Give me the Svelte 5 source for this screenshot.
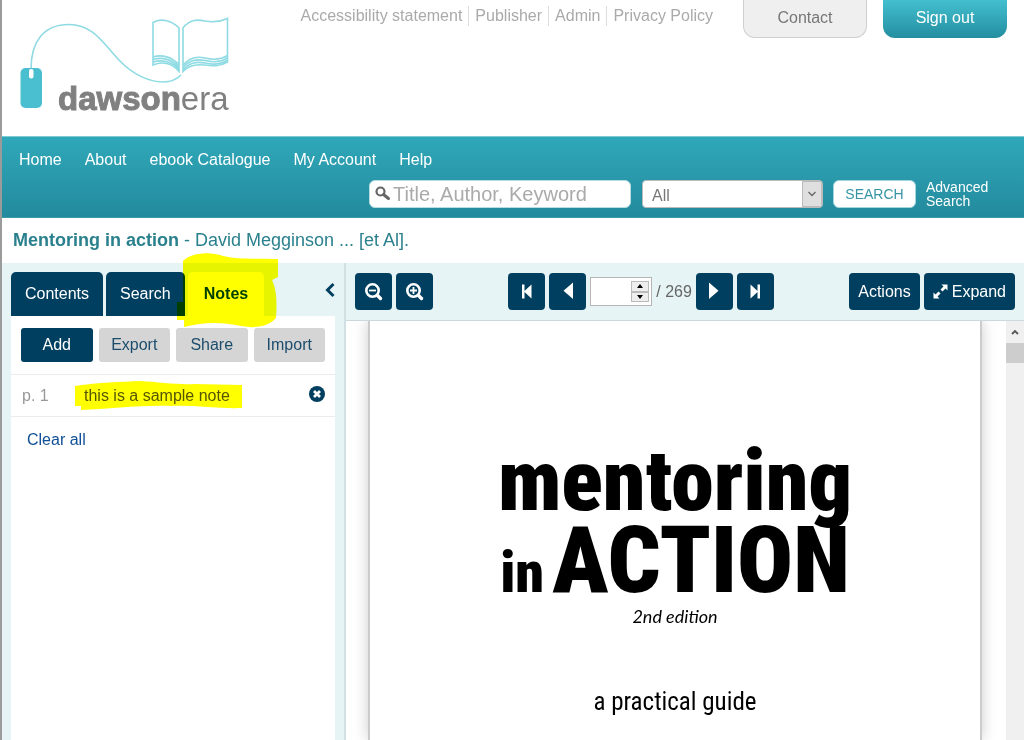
<script lang="ts">
  const links = ['Accessibility statement', 'Publisher', 'Admin', 'Privacy Policy'];
  const menu = ['Home', 'About', 'ebook Catalogue', 'My Account', 'Help'];
  const tabs = ['Contents', 'Search', 'Notes'];
  const noteActions = ['Add', 'Export', 'Share', 'Import'];
  const pageCount = 269;

  let activeTab = $state('Notes');
  let notes = $state([{ page: 1, text: 'this is a sample note' }]);
  let query = $state('');
  let page = $state('');

  function step(by: number) {
    const next = (Number(page) || 0) + by;
    page = String(Math.min(pageCount, Math.max(1, next)));
  }
</script>

<div class="app">
  <header>
    <a class="logo" href="#home" aria-label="dawsonera">
      <svg width="216" height="104" viewBox="16 12 216 104">
        <g fill="none" stroke="#8fdbe3" stroke-width="1.6">
          <path d="M31 69C31 41 44 24.500 69 24.500C93 24.500 103 43 119 60C133 75 150 82 163 82C171 82 177 79 181 75" />
          <path d="M153 22.500C160 18 171 20 179 28V71.500C172 63 162 61 153 65Z" />
          <path d="M183 28C190 19 198 19.500 205 21C213 22.500 221 21.500 227.500 18.500V62C219 67 212 66 204 65C196 64 189 65 183 71.500Z" />
          <path d="M153 57C162 54 172 57 179 65M153 59.500C162 56.500 172 59.500 179 67.500M153 62C162 59 172 62 179 69.500" />
          <path d="M183 65C190 57 197 56 205 58C213 60 221 59.500 227.500 55.500M183 67.500C190 59.500 197 59 205 60.500C213 62.500 221 62 227.500 58M183 70C190 62 197 61.500 205 63C213 65 221 64 227.500 60.500" />
        </g>
        <rect x="20.500" y="68" width="21.500" height="40" rx="5" fill="#4abfcf" />
        <rect x="29" y="69" width="4.500" height="9.500" rx="2" fill="#fff" />
        <text x="58" y="109.500" fill="#808080" font-size="33"><tspan font-weight="bold" stroke="#808080">dawson</tspan><tspan>era</tspan></text>
      </svg>
    </a>
    <nav class="links" aria-label="Site information">
      {#each links as link}
        <a href="#info">{link}</a>
      {/each}
    </nav>
    <a class="pill contact" href="#contact">Contact</a>
    <a class="pill signout" href="#signout">Sign out</a>
  </header>

  <div class="banner">
    <nav class="menu" aria-label="Main">
      {#each menu as item}
        <a href="#menu">{item}</a>
      {/each}
    </nav>
    <form class="search" onsubmit={(e) => e.preventDefault()}>
      <label class="query">
        <svg width="16" height="16" viewBox="0 0 16 16" fill="none" stroke="#666">
          <circle cx="5.500" cy="5.500" r="4" stroke-width="2.200" />
          <path d="M8.500 8.500L13.500 12.500" stroke-width="3" stroke-linecap="round" />
        </svg>
        <input type="text" aria-label="Search" placeholder="Title, Author, Keyword" bind:value={query} />
      </label>
      <div class="scope">
        <select aria-label="Search in">
          <option>All</option>
          <option>Title</option>
          <option>Author</option>
        </select>
        <span class="arrow">
          <svg width="10" height="6" viewBox="0 0 10 6"><path d="M1.500 1L5 4.500L8.500 1" fill="none" stroke="#666" stroke-width="1.300" /></svg>
        </span>
      </div>
      <button class="go">SEARCH</button>
      <a class="advanced" href="#advanced">Advanced Search</a>
    </form>
  </div>

  <h1><strong>Mentoring in action</strong> - David Megginson ... [et Al].</h1>

  <main>
    <aside>
      <div class="tabs">
        {#each tabs as tab}
          <button class="tab" class:active={tab === activeTab} onclick={() => (activeTab = tab)}>
            {tab}
            {#if tab === 'Notes'}
              <svg class="marker tab-marker" width="102" height="77" viewBox="0 0 102 77">
                <path d="M6 9C14 1 32 -1 46 4C63 8 78 6 101 7V25L95 28C100 38 100 52 99 66C92 74 80 77 64 74C44 70 28 70 7 75V68H0V50H6Z" />
              </svg>
            {/if}
          </button>
        {/each}
        <button class="collapse" aria-label="Collapse panel">
          <svg width="10" height="16" viewBox="0 0 10 16"><path d="M8.500 2L2.500 8L8.500 14" fill="none" stroke="#003f5f" stroke-width="3" /></svg>
        </button>
      </div>
      <div class="panel">
        <div class="note-actions">
          {#each noteActions as action, i}
            <button class:primary={i === 0}>{action}</button>
          {/each}
        </div>
        <ul>
          {#each notes as note, i}
            <li>
              <span class="page-no">p. {note.page}</span>
              <span class="note">
                {note.text}
                <svg class="marker note-marker" width="167" height="29" viewBox="0 0 167 29">
                  <path d="M0 5C25 1 45 1 65 0C85 1 102 4 120 3L167 4V27C145 28 120 24 96 25C66 24 34 28 6 29V25H0Z" />
                </svg>
              </span>
              <button class="delete" aria-label="Delete note" onclick={() => notes.splice(i, 1)}>
                <svg width="16" height="16" viewBox="0 0 16 16">
                  <circle cx="8" cy="8" r="8" fill="#003f5f" />
                  <path d="M5 5L11 11M11 5L5 11" stroke="#fff" stroke-width="2.800" />
                </svg>
              </button>
            </li>
          {/each}
        </ul>
        <button class="clear" onclick={() => (notes = [])}>Clear all</button>
      </div>
    </aside>

    <section class="viewer">
      <div class="toolbar">
        <div class="group">
          {#each ['out', 'in'] as zoom}
            <button aria-label={`Zoom ${zoom}`}>
              <svg width="20" height="20" viewBox="0 0 20 20" fill="none" stroke="#fff">
                <circle cx="8.500" cy="8.500" r="6.200" stroke-width="2.600" />
                <path d="M13.500 13.500L16.500 16.500" stroke-width="3.400" stroke-linecap="round" />
                <path d={zoom === 'in' ? 'M5 8.500H12M8.500 5V12' : 'M5 8.500H12'} stroke-width="1.800" />
              </svg>
            </button>
          {/each}
        </div>
        <div class="group">
          <button aria-label="First page" onclick={() => (page = '1')}>
            <svg width="20" height="20" viewBox="0 0 20 20" fill="#fff"><path d="M5 2.500H7.500V9L14.500 2.500V16.500L7.500 10V16.500H5Z" /></svg>
          </button>
          <button aria-label="Previous page" onclick={() => step(-1)}>
            <svg width="20" height="20" viewBox="0 0 20 20" fill="#fff"><path d="M15 0.500V17L5.500 8.800Z" /></svg>
          </button>
          <div class="page-field">
            <input type="text" aria-label="Page" bind:value={page} />
            <span class="spinner">
              <button aria-label="Next" onclick={() => step(1)}><svg width="6" height="4" viewBox="0 0 6 4"><path d="M0 4L3 0L6 4Z" /></svg></button>
              <button aria-label="Previous" onclick={() => step(-1)}><svg width="6" height="4" viewBox="0 0 6 4"><path d="M0 0L3 4L6 0Z" /></svg></button>
            </span>
          </div>
          <span class="total">/ {pageCount}</span>
          <button aria-label="Next page" onclick={() => step(1)}>
            <svg width="20" height="20" viewBox="0 0 20 20" fill="#fff"><path d="M5 0.500V17L14.500 8.800Z" /></svg>
          </button>
          <button aria-label="Last page" onclick={() => (page = String(pageCount))}>
            <svg width="20" height="20" viewBox="0 0 20 20" fill="#fff"><path d="M15 2.500H12.500V9L5.500 2.500V16.500L12.500 10V16.500H15Z" /></svg>
          </button>
        </div>
        <div class="group">
          <button class="wide">Actions</button>
          <button class="wide">
            <svg width="15" height="15" viewBox="0 0 15 15" fill="#fff">
              <path d="M8.500 0.500H14.500V6.500L12.500 4.500L9.500 7.500L7.500 5.500L10.500 2.500ZM0.500 8.500L2.500 10.500L5.500 7.500L7.500 9.500L4.500 12.500L6.500 14.500H0.500Z" />
            </svg>
            Expand
          </button>
        </div>
      </div>
      <div class="document">
        <div class="sheet-area">
          <article>
            <h2>
              <span class="line-one">mentoring</span>
              <span class="line-two"><small>in</small><span>ACTION</span></span>
            </h2>
            <p class="edition">2nd edition</p>
            <p class="subtitle">a practical guide</p>
          </article>
        </div>
        <div class="scrollbar" aria-hidden="true">
          <span class="up"><svg width="8" height="6" viewBox="0 0 8 6"><path d="M1 5L4 2L7 5" fill="none" stroke="#555" stroke-width="1.800" /></svg></span>
          <span class="thumb"></span>
        </div>
      </div>
    </section>
  </main>
</div>

<style>
  :global(body) {
    margin: 0;
  }

  .app {
    display: flex;
    flex-direction: column;
    box-sizing: border-box;
    height: 100vh;
    overflow: hidden;
    border-left: 2px solid #9b9b9b;
    color: #555;
    background: #fff;
    font: 16px/20px 'Liberation Sans', Arial, sans-serif;
  }

  .app :global(*) {
    box-sizing: border-box;
  }

  a {
    color: inherit;
    text-decoration: none;
  }

  button,
  input,
  select {
    margin: 0;
    padding: 0;
    border: 0;
    color: inherit;
    background: none;
    font: inherit;
  }

  button {
    cursor: pointer;
  }

  svg {
    display: block;
    flex: none;
  }

  header {
    display: flex;
    align-items: flex-start;
    flex: none;
    height: 136px;
    padding-right: 17px;
  }

  .logo {
    margin: 12px auto 0 14px;
  }

  .links {
    display: flex;
    margin: 6px 24px 0 0;
    color: #aaa;
  }

  .links a {
    padding: 0 6px;
    border-right: 1px solid #ddd;
  }

  .links a:last-child {
    border-right: 0;
  }

  .pill {
    width: 124px;
    height: 38px;
    border-radius: 0 0 12px 12px;
    line-height: 36px;
    text-align: center;
  }

  .contact {
    margin-right: 16px;
    border: 1px solid #cfcfcf;
    border-top: 0;
    color: #777;
    background: #efefef;
  }

  .signout {
    color: #fff;
    background: linear-gradient(#43bfcf, #238ea0);
  }

  .banner {
    flex: none;
    height: 82px;
    padding: 14px 20px 0 17px;
    border-top: 1px solid #7ccbd5;
    border-bottom: 1px solid #3d9cab;
    color: #fff;
    background: linear-gradient(#2fa8b9, #238a9d);
  }

  .menu {
    display: flex;
    gap: 23px;
    height: 29px;
    line-height: 18px;
  }

  .search {
    display: flex;
    justify-content: flex-end;
    align-items: center;
  }

  .query {
    display: flex;
    align-items: center;
    width: 262px;
    height: 28px;
    margin-right: 11px;
    padding-left: 5px;
    border: 1px solid #b9dce2;
    border-radius: 6px;
    background: #fff;
  }

  .query input {
    flex: 1;
    min-width: 0;
    height: 26px;
    margin-left: 2px;
    outline: 0;
    color: #555;
    font-size: 20px;
  }

  .query input::placeholder {
    color: #aaa;
    opacity: 1;
  }

  .scope {
    position: relative;
    width: 181px;
    margin-right: 10px;
  }

  .scope select {
    display: block;
    width: 100%;
    height: 28px;
    padding: 3px 9px 0;
    border: 1px solid #bbb;
    border-radius: 4px;
    appearance: none;
    color: #777;
    background: #fff;
  }

  .arrow {
    position: absolute;
    top: 1px;
    right: 1px;
    bottom: 1px;
    display: grid;
    width: 20px;
    border: 1px solid #bbb;
    background: #dfdfdf;
    place-items: center;
    pointer-events: none;
  }

  .go {
    width: 83px;
    height: 28px;
    margin-right: 10px;
    border: 1px solid #a5d5dc;
    border-radius: 6px;
    color: #3595a4;
    background: #fff;
    font-size: 14px;
  }

  .advanced {
    width: 78px;
    font-size: 14px;
    line-height: 14px;
  }

  h1 {
    flex: none;
    height: 45px;
    margin: 0;
    padding-left: 11px;
    color: #2a808d;
    font-size: 18px;
    font-weight: 400;
    line-height: 45px;
  }

  main {
    display: flex;
    flex: 1;
    min-height: 0;
    background: #e6f4f6;
  }

  aside {
    display: flex;
    flex: none;
    flex-direction: column;
    width: 344px;
    padding: 9px 9px 0;
    border-right: 2px solid #d0e0e3;
  }

  .tabs {
    display: flex;
    gap: 3px;
    height: 44px;
  }

  .tab {
    position: relative;
    padding: 0 14px;
    border-radius: 5px 5px 0 0;
    color: #fff;
    background: #003f5f;
  }

  .tab.active {
    padding: 0 16px;
    color: #003f5f;
    background: #fff;
    font-weight: bold;
  }

  .marker {
    position: absolute;
    z-index: 1;
    fill: #ff0;
    mix-blend-mode: multiply;
    pointer-events: none;
  }

  .tab-marker {
    top: -20px;
    left: -11px;
  }

  .collapse {
    align-self: flex-start;
    margin: 10px 0 0 auto;
  }

  .panel {
    flex: 1;
    background: #fff;
  }

  .note-actions {
    display: grid;
    grid-template-columns: repeat(4, 1fr);
    gap: 6px;
    padding: 12px 10px;
  }

  .note-actions button {
    height: 34px;
    border-radius: 3px;
    color: #1c4c6b;
    background: #d5d5d5;
  }

  .note-actions .primary {
    color: #fff;
    background: #003f5f;
  }

  ul {
    margin: 0;
    padding: 0;
    border-top: 1px solid #ececec;
    list-style: none;
  }

  li {
    display: flex;
    align-items: center;
    height: 42px;
    padding: 0 10px 0 11px;
    border-bottom: 1px solid #ececec;
  }

  .page-no {
    width: 62px;
    color: #999;
  }

  .note {
    position: relative;
    color: #555;
  }

  .note-marker {
    top: -5px;
    left: -9px;
  }

  .delete {
    margin: -4px 0 0 auto;
  }

  .clear {
    margin: 13px 16px;
    color: #0f4f96;
  }

  .viewer {
    display: flex;
    flex: 1;
    flex-direction: column;
    min-width: 0;
  }

  .toolbar {
    display: flex;
    flex: none;
    align-items: center;
    justify-content: space-between;
    height: 58px;
    padding: 0 9px;
    border-bottom: 1px solid #cbd9dc;
  }

  .group {
    display: flex;
    align-items: center;
    gap: 4px;
  }

  .group > button {
    display: flex;
    align-items: center;
    justify-content: center;
    gap: 4px;
    width: 37px;
    height: 37px;
    border-radius: 4px;
    color: #fff;
    background: #003f5f;
  }

  .group > .wide {
    width: auto;
    padding: 0 9px;
  }

  .page-field {
    display: flex;
    width: 62px;
    height: 29px;
    padding: 3px 2px;
    border: 1px solid #b5b5b5;
    background: #fff;
  }

  .page-field input {
    flex: 1;
    min-width: 0;
    outline: 0;
  }

  .spinner {
    display: grid;
    width: 18px;
  }

  .spinner button {
    display: grid;
    border: 1px solid #bbb;
    background: #eee;
    place-items: center;
  }

  .total {
    color: #666;
  }

  .document {
    display: flex;
    flex: 1;
    min-height: 0;
    background: #fff;
  }

  .sheet-area {
    display: flex;
    flex: 1;
    padding: 0 24px 0 22px;
    overflow: hidden;
  }

  article {
    flex: 1;
    padding-top: 120px;
    border: solid #ccc;
    border-width: 0 2px;
    color: #000;
    box-shadow: 0 0 14px #ccc;
    text-align: center;
  }

  h2 {
    margin: 0;
    font-family: 'Roboto Condensed', 'Liberation Sans Narrow', 'Roboto', sans-serif;
    font-weight: 900;
  }

  h2 > span {
    display: block;
    white-space: nowrap;
  }

  .line-one {
    font-size: 86px;
    line-height: 80px;
  }

  .line-two {
    font-size: 93px;
    line-height: 80px;
  }

  small {
    margin-right: 8px;
    font-size: 58px;
    line-height: 60px;
  }

  p {
    margin: 0;
  }

  .edition {
    margin-top: 4px;
    font: italic 18px/20px 'Lato', sans-serif;
  }

  .subtitle {
    margin-top: 62px;
    font: 25px/28px 'Roboto Condensed', 'Open Sans', sans-serif;
  }

  .scrollbar {
    width: 18px;
    background: #f0f0f0;
  }

  .up {
    display: grid;
    height: 22px;
    place-items: center;
  }

  .thumb {
    display: block;
    height: 20px;
    background: #cdcdcd;
  }
</style>
